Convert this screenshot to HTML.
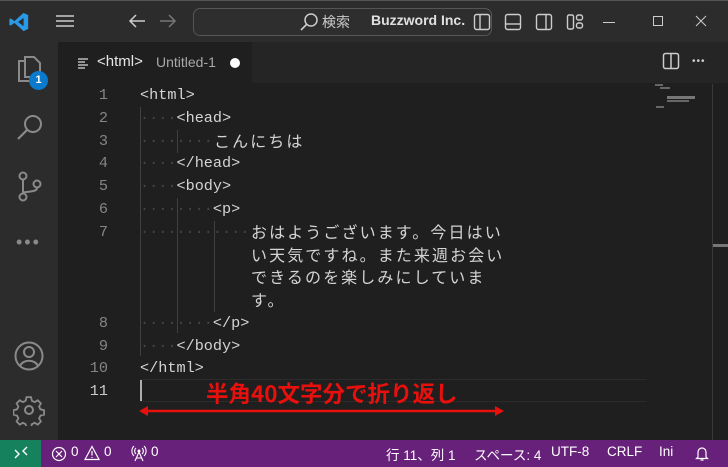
<!DOCTYPE html>
<html><head><meta charset="utf-8"><style>
*{margin:0;padding:0;box-sizing:border-box}
body{width:728px;height:467px;overflow:hidden;background:#1f1f1f;font-family:"Liberation Sans","Noto Sans CJK JP",sans-serif;position:relative;color:#ccc}
.abs{position:absolute}
#title{left:0;top:0;width:728px;height:42px;background:#2c2c2c;border-top:1px solid #555}
#act{left:0;top:42px;width:58px;height:398px;background:#2c2c2c}
#tabs{left:58px;top:42px;width:670px;height:41px;background:#252525}
#tab{left:58px;top:42px;width:194px;height:41px;background:#1f1f1f}
.code{font-family:"Liberation Mono","Noto Sans CJK JP",monospace;font-size:15.2px;color:#d4d4d4;white-space:pre;line-height:23px;height:23px}
.ln{font-family:"Liberation Mono",monospace;font-size:15.2px;color:#858585;width:50px;text-align:right;line-height:23px;left:58px}
.d{color:#444}
.jp{font-family:"Noto Sans CJK JP",sans-serif;font-size:16px;letter-spacing:2.1px;color:#d4d4d4;white-space:pre;line-height:23px}
.g{position:absolute;width:1px;background:#404040}
#status{left:0;top:440px;width:728px;height:27px;background:#68217a;color:#fff;font-size:13.5px}
#status span{position:absolute;top:4px}
</style></head><body>
<div id="title" class="abs">
<svg class="abs" style="left:8px;top:10px" width="22" height="22" viewBox="0 0 24 24"><path d="M17 2 L22 4.5 V19.5 L17 22 L7 13 L3 16 L1.5 15 V9 L3 8 L7 11 Z M17 7.5 L11 12 L17 16.5 Z" fill="#2b9ae6"/></svg>
<svg class="abs" style="left:55px;top:12px" width="20" height="16"><path d="M1 3h18M1 8h18M1 13h18" stroke="#ccc" stroke-width="1.6"/></svg>
<svg class="abs" style="left:127px;top:12px" width="20" height="16"><path d="M18 8H3M9 2L3 8l6 6" stroke="#ccc" stroke-width="1.5" fill="none"/></svg>
<svg class="abs" style="left:158px;top:12px" width="20" height="16"><path d="M2 8h15M11 2l6 6-6 6" stroke="#777" stroke-width="1.5" fill="none"/></svg>
<div class="abs" style="left:193px;top:7px;width:299px;height:28px;border:1px solid #555;border-radius:7px;background:#2e2e2e"></div>
<svg class="abs" style="left:299px;top:11px" width="20" height="20"><circle cx="12" cy="8" r="6" stroke="#ccc" stroke-width="1.5" fill="none"/><path d="M8 12L2 18" stroke="#ccc" stroke-width="1.6"/></svg>
<div class="abs" style="left:322px;top:11px;font-size:14px;color:#ccc">検索</div>
<div class="abs" style="left:371px;top:11px;font-size:14px;color:#e0e0e0;font-weight:bold">Buzzword Inc.</div>
<svg class="abs" style="left:472px;top:11px" width="20" height="20"><rect x="2.5" y="2.5" width="15" height="15" rx="2" stroke="#ccc" stroke-width="1.4" fill="none"/><path d="M8 3v14" stroke="#ccc" stroke-width="1.4"/></svg>
<svg class="abs" style="left:503px;top:11px" width="20" height="20"><rect x="2.5" y="2.5" width="15" height="15" rx="2" stroke="#ccc" stroke-width="1.4" fill="none"/><path d="M3 12h14" stroke="#ccc" stroke-width="1.4"/></svg>
<svg class="abs" style="left:534px;top:11px" width="20" height="20"><rect x="2.5" y="2.5" width="15" height="15" rx="2" stroke="#ccc" stroke-width="1.4" fill="none"/><path d="M12 3v14" stroke="#ccc" stroke-width="1.4"/></svg>
<svg class="abs" style="left:565px;top:11px" width="20" height="20"><rect x="2.5" y="3" width="6" height="14" rx="1.5" stroke="#ccc" stroke-width="1.4" fill="none"/><rect x="11.5" y="3" width="6" height="5" rx="2" stroke="#ccc" stroke-width="1.4" fill="none"/><rect x="11.5" y="11" width="6" height="5" rx="2" stroke="#ccc" stroke-width="1.4" fill="none"/></svg>
<div class="abs" style="left:603px;top:21px;width:12px;height:1px;background:#ccc"></div>
<div class="abs" style="left:653px;top:15px;width:10px;height:10px;border:1px solid #ccc"></div>
<svg class="abs" style="left:695px;top:14px" width="12" height="12"><path d="M1 1l10 10M11 1L1 11" stroke="#ccc" stroke-width="1"/></svg>
</div>
<div id="act" class="abs">
<svg class="abs" style="left:15px;top:13px" width="30" height="32"><path d="M10 6H4v20h14v-4" stroke="#8a8a8a" stroke-width="2" fill="none"/><path d="M10 2h9l6 6v14H10z" stroke="#8a8a8a" stroke-width="2" fill="none"/></svg>
<div class="abs" style="left:29px;top:29px;width:19px;height:19px;border-radius:50%;background:#0a7acc;color:#fff;font-size:11px;font-weight:bold;text-align:center;line-height:19px">1</div>
<svg class="abs" style="left:15px;top:70px" width="30" height="32"><circle cx="18" cy="12" r="8" stroke="#8a8a8a" stroke-width="2" fill="none"/><path d="M12 18L3 27" stroke="#8a8a8a" stroke-width="2.2"/></svg>
<svg class="abs" style="left:15px;top:128px" width="30" height="34"><circle cx="8" cy="6" r="3.5" stroke="#8a8a8a" stroke-width="2" fill="none"/><circle cx="8" cy="27" r="3.5" stroke="#8a8a8a" stroke-width="2" fill="none"/><circle cx="22" cy="14" r="3.5" stroke="#8a8a8a" stroke-width="2" fill="none"/><path d="M8 10v13M22 18c0 5-14 3-14 5" stroke="#8a8a8a" stroke-width="2" fill="none"/></svg>
<div class="abs" style="left:16px;top:190px;color:#8a8a8a;font-size:18px;letter-spacing:2px">•••</div>
<svg class="abs" style="left:13px;top:298px" width="32" height="32"><circle cx="16" cy="16" r="13.5" stroke="#8a8a8a" stroke-width="2" fill="none"/><circle cx="16" cy="12" r="5" stroke="#8a8a8a" stroke-width="2" fill="none"/><path d="M7 26c3-7 15-7 18 0" stroke="#8a8a8a" stroke-width="2" fill="none"/></svg>
<svg class="abs" style="left:13px;top:352px" width="32" height="32" viewBox="0 0 32 32"><path d="M13.5 2h5l1 4 3 1.5 3.5-2 3.5 3.5-2 3.5 1.5 3 4 1v5l-4 1-1.5 3 2 3.5-3.5 3.5-3.5-2-3 1.5-1 4h-5l-1-4-3-1.5-3.5 2-3.5-3.5 2-3.5-1.5-3-4-1v-5l4-1 1.5-3-2-3.5 3.5-3.5 3.5 2 3-1.5z" stroke="#8a8a8a" stroke-width="2" fill="none" transform="scale(0.9) translate(1.5,1.5)"/><circle cx="16" cy="16" r="4" stroke="#8a8a8a" stroke-width="2" fill="none"/></svg>
</div>
<div id="tabs" class="abs"></div>
<div id="tab" class="abs">
<svg class="abs" style="left:20px;top:16px" width="12" height="12"><path d="M0 1h10M0 4h7M0 7h10M0 10h7" stroke="#bbb" stroke-width="1.4"/></svg>
<div class="abs" style="left:39px;top:11px;font-size:15px;color:#e6e6e6">&lt;html&gt;</div>
<div class="abs" style="left:98px;top:12px;font-size:14px;color:#a8a8a8">Untitled-1</div>
<div class="abs" style="left:172px;top:16px;width:10px;height:10px;border-radius:50%;background:#fff"></div>
</div>
<svg class="abs" style="left:662px;top:52px" width="18" height="18"><rect x="1.5" y="1.5" width="15" height="15" rx="2" stroke="#ccc" stroke-width="1.5" fill="none"/><path d="M9 2v14" stroke="#ccc" stroke-width="1.5"/></svg>
<div class="abs" style="left:692px;top:56px;color:#ccc;font-size:10px;letter-spacing:1px">•••</div>

<div class="abs" style="left:140px;top:379px;width:507px;height:23px;border-top:1px solid #2b2b2b;border-bottom:1px solid #2b2b2b"></div>
<div class="abs" style="left:140px;top:380px;width:2px;height:21px;background:#aeaeae"></div>

<div class="g" style="left:140px;top:107px;height:249px"></div>
<div class="g" style="left:177px;top:130px;height:23px"></div>
<div class="g" style="left:177px;top:198px;height:135px"></div>
<div class="g" style="left:214px;top:221px;height:91px"></div>

<div class="abs ln" style="top:84px">1</div>
<div class="abs ln" style="top:107px">2</div>
<div class="abs ln" style="top:130px">3</div>
<div class="abs ln" style="top:152px">4</div>
<div class="abs ln" style="top:175px">5</div>
<div class="abs ln" style="top:198px">6</div>
<div class="abs ln" style="top:221px">7</div>
<div class="abs ln" style="top:312px">8</div>
<div class="abs ln" style="top:335px">9</div>
<div class="abs ln" style="top:357px">10</div>
<div class="abs ln" style="top:380px;color:#ccc">11</div>

<div class="abs code" style="left:140px;top:84px">&lt;html&gt;</div>
<div class="abs code" style="left:140px;top:107px"><span class="d">····</span>&lt;head&gt;</div>
<div class="abs code" style="left:140px;top:130px"><span class="d">········</span></div>
<div class="abs jp" style="left:214px;top:129px">こんにちは</div>
<div class="abs code" style="left:140px;top:152px"><span class="d">····</span>&lt;/head&gt;</div>
<div class="abs code" style="left:140px;top:175px"><span class="d">····</span>&lt;body&gt;</div>
<div class="abs code" style="left:140px;top:198px"><span class="d">········</span>&lt;p&gt;</div>
<div class="abs code" style="left:140px;top:221px"><span class="d">············</span></div>
<div class="abs jp" style="left:251px;top:220px">おはようございます。今日はい</div>
<div class="abs jp" style="left:251px;top:243px">い天気ですね。また来週お会い</div>
<div class="abs jp" style="left:251px;top:265px">できるのを楽しみにしていま</div>
<div class="abs jp" style="left:251px;top:288px">す。</div>
<div class="abs code" style="left:140px;top:312px"><span class="d">········</span>&lt;/p&gt;</div>
<div class="abs code" style="left:140px;top:335px"><span class="d">····</span>&lt;/body&gt;</div>
<div class="abs code" style="left:140px;top:357px">&lt;/html&gt;</div>

<div class="abs" style="left:206px;top:379px;font-size:22.5px;font-weight:bold;color:#e8100c;font-family:'Noto Sans CJK JP',sans-serif;line-height:28px">半角40文字分で折り返し</div>
<svg class="abs" style="left:138px;top:404px" width="368" height="14"><path d="M8 7H358" stroke="#e8100c" stroke-width="2.5"/><path d="M1 7l9-5v10z M366 7l-9-5v10z" fill="#e8100c"/></svg>

<div class="abs" style="left:655px;top:84px;width:8px;height:2px;background:#666"></div>
<div class="abs" style="left:660px;top:87px;width:10px;height:2px;background:#666"></div>
<div class="abs" style="left:667px;top:96px;width:28px;height:3px;background:#777"></div>
<div class="abs" style="left:667px;top:100px;width:22px;height:2px;background:#666"></div>
<div class="abs" style="left:656px;top:106px;width:8px;height:2px;background:#666"></div>
<div class="abs" style="left:712px;top:84px;width:1px;height:356px;background:#3a3a3a"></div>
<div class="abs" style="left:713px;top:244px;width:15px;height:3px;background:#777"></div>

<div id="status" class="abs">
<div class="abs" style="left:0;top:0;width:41px;height:27px;background:#16825d"></div>
<svg class="abs" style="left:13px;top:6px" width="16" height="14"><path d="M2 4l4 4-4 4M14 1l-4 4 4 4" stroke="#fff" stroke-width="1.4" fill="none"/></svg>
<svg class="abs" style="left:51px;top:6px" width="16" height="16"><circle cx="8" cy="8" r="6.5" stroke="#fff" stroke-width="1.2" fill="none"/><path d="M5 5l6 6M11 5l-6 6" stroke="#fff" stroke-width="1.2"/></svg>
<span style="left:71px">0</span>
<svg class="abs" style="left:84px;top:5px" width="16" height="16"><path d="M8 1.5L15 14.5H1z" stroke="#fff" stroke-width="1.2" fill="none"/><path d="M8 6v4.5M8 12v1" stroke="#fff" stroke-width="1.2"/></svg>
<span style="left:104px">0</span>
<svg class="abs" style="left:131px;top:5px" width="16" height="17"><circle cx="8" cy="6" r="1.5" fill="#fff"/><path d="M5 3a4 4 0 000 6M11 3a4 4 0 010 6M3 1a7 7 0 000 10M13 1a7 7 0 010 10M8 7l-4 9M8 7l4 9M5.5 13h5" stroke="#fff" stroke-width="1.1" fill="none"/></svg>
<span style="left:151px">0</span>
<span style="left:386px">行 11、列 1</span>
<span style="left:474px">スペース: 4</span>
<span style="left:551px">UTF-8</span>
<span style="left:607px">CRLF</span>
<span style="left:659px">Ini</span>
<svg class="abs" style="left:694px;top:5px" width="16" height="17"><path d="M4 12V7a4 4 0 018 0v5l1.5 1.5h-11z M6.5 15h3" stroke="#fff" stroke-width="1.2" fill="none"/></svg>
</div>
</body></html>
